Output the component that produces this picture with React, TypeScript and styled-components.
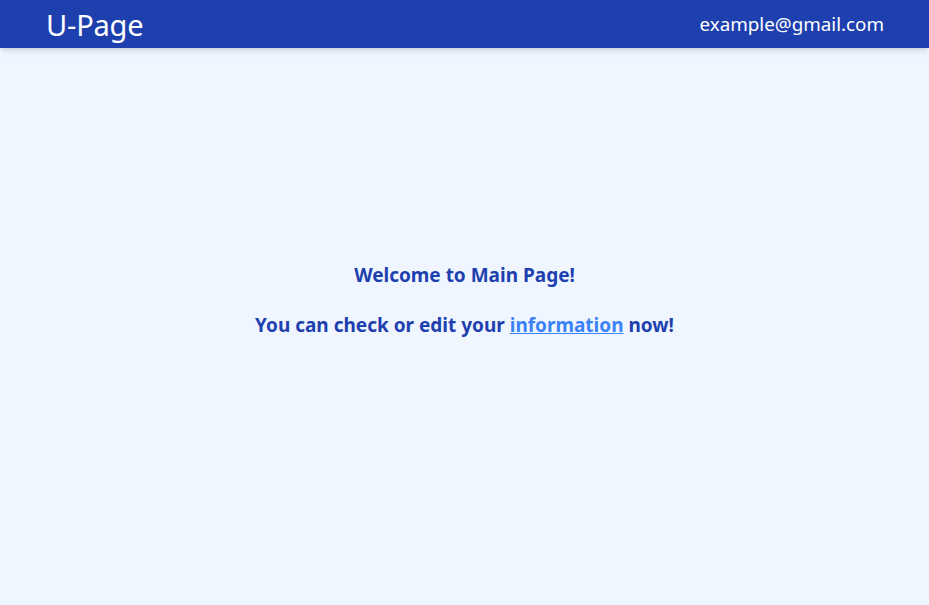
import React from "react";
import styled, { createGlobalStyle } from "styled-components";

const Global = createGlobalStyle`
  html, body { margin: 0; padding: 0; }
  body {
    font-family: "Noto Sans", "Open Sans", sans-serif;
    background: #eff6ff;
  }
`;

const Page = styled.div`
  position: relative;
  height: 605px;
  box-sizing: border-box;
  padding-bottom: 6px;
  background: #eff6ff;
  display: flex;
  align-items: center;
  justify-content: center;
`;

const Header = styled.header`
  position: absolute;
  top: 0;
  left: 0;
  right: 0;
  height: 48px;
  background: #1e40af;
  box-shadow: 0 4px 6px -1px rgba(0,0,0,0.1), 0 2px 4px -2px rgba(0,0,0,0.1);
  display: flex;
  align-items: center;
  justify-content: space-between;
  padding: 0 45px 0 46px;
  box-sizing: border-box;
`;

const Logo = styled.div`
  color: #ffffff;
  font-size: 29px;
  line-height: 1;
  letter-spacing: -0.2px;
`;

const Email = styled.div`
  color: #ffffff;
  font-size: 18.8px;
`;

const Content = styled.main`
  display: flex;
  flex-direction: column;
  align-items: center;
  gap: 26px;
  color: #1e40af;
  font-weight: 700;
  font-size: 19px;
  line-height: 24px;
`;

const Line = styled.p`
  margin: 0;
`;

const InfoLink = styled.a`
  color: #3b82f6;
  text-decoration: underline;
`;

export default function App() {
  return (
    <>
      <Global />
      <Page>
        <Header>
          <Logo>U-Page</Logo>
          <Email>example@gmail.com</Email>
        </Header>
        <Content>
          <Line>Welcome to Main Page!</Line>
          <Line>
            You can check or edit your <InfoLink href="#">information</InfoLink> now!
          </Line>
        </Content>
      </Page>
    </>
  );
}
